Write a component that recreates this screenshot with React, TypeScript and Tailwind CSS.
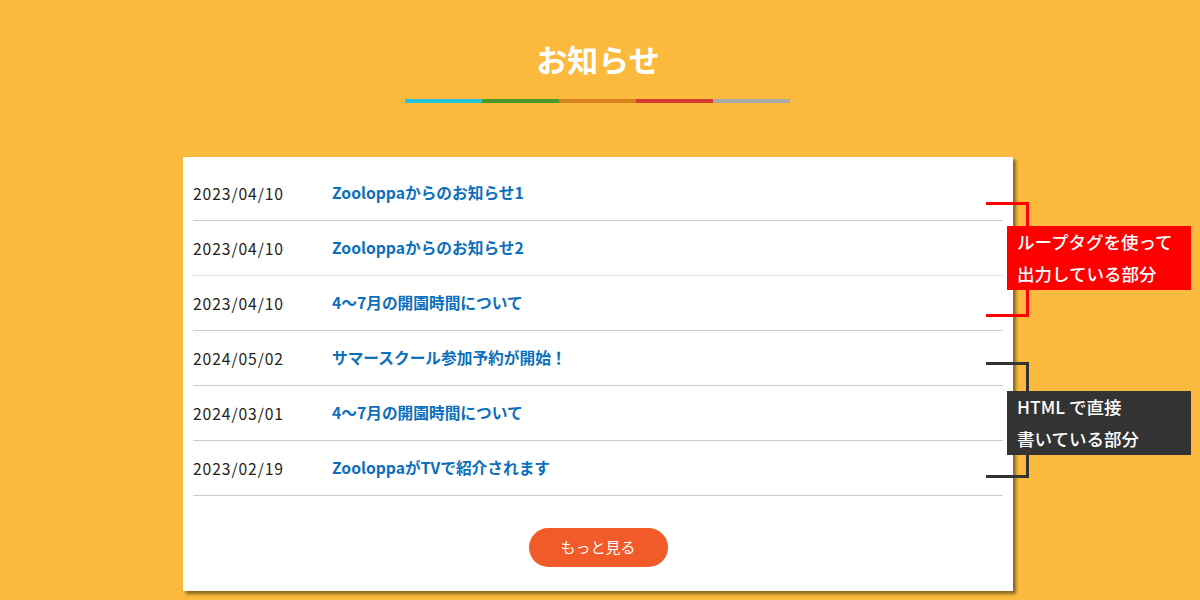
const items = [
  { date: "2023/04/10", title: "Zooloppaからのお知らせ1", border: "border-[#cccccc]" },
  { date: "2023/04/10", title: "Zooloppaからのお知らせ2", border: "border-[#e0e0e0]" },
  { date: "2023/04/10", title: "4〜7月の開園時間について", border: "border-[#cccccc]" },
  { date: "2024/05/02", title: "サマースクール参加予約が開始！", border: "border-[#cccccc]" },
  { date: "2024/03/01", title: "4〜7月の開園時間について", border: "border-[#cccccc]" },
  { date: "2023/02/19", title: "ZooloppaがTVで紹介されます", border: "border-[#cccccc]" },
];

const font = { fontFamily: '"Noto Sans CJK JP", "Noto Sans", sans-serif' };

export default function App() {
  return (
    <div className="min-h-[600px] bg-[#fbb93e] pt-[36px] pb-[10px] pr-[4px]" style={font}>
      {/* Heading */}
      <h1 className="text-center text-[31px] font-bold leading-[46px] text-white">お知らせ</h1>
      <div className="mx-auto mt-[17px] flex h-[4px] w-[385px] -translate-x-[1px]">
        <div className="flex-1 bg-[#26c6da]" />
        <div className="flex-1 bg-[#4a9a2a]" />
        <div className="flex-1 bg-[#d4821e]" />
        <div className="flex-1 bg-[#d53a30]" />
        <div className="flex-1 bg-[#aaaaaa]" />
      </div>

      {/* Card */}
      <div className="relative mx-auto mt-[54px] w-[830px] bg-white px-[10px] pt-[9px] pb-[24px] shadow-[3px_3px_3px_rgba(0,0,0,0.45)]">
        <ul>
          {items.map((it, i) => (
            <li key={i} className={`flex h-[55px] items-center border-b ${it.border} leading-[24px]`}>
              <span className="w-[139px] pt-[2px] text-[15.7px] tracking-[0.9px] text-[#222]">{it.date}</span>
              <a className="text-[15.7px] font-bold text-[#0b6fbd]">{it.title}</a>
            </li>
          ))}
        </ul>
        <div className="mt-[32px] flex justify-center">
          <button className="h-[39px] w-[139px] rounded-full bg-[#f15a29] text-[15px] text-white">もっと見る</button>
        </div>

        {/* annotations */}
        <div className="absolute left-[803px] top-[45px] h-[115px] w-[43px] border-y-[3px] border-r-[3px] border-[#ff0000]" />
        <div className="absolute left-[824px] top-[69px] flex h-[64px] w-[184px] flex-col justify-center bg-[#ff0000] pl-[10px] text-[17.5px] font-medium leading-[32px] text-white">
          <span>ループタグを使って</span>
          <span>出力している部分</span>
        </div>
        <div className="absolute left-[803px] top-[205px] h-[116px] w-[43px] border-y-[3px] border-r-[3px] border-[#333333]" />
        <div className="absolute left-[824px] top-[234px] flex h-[64px] w-[184px] flex-col justify-center bg-[#333333] pl-[10px] text-[17.5px] font-medium leading-[32px] text-white">
          <span>HTML で直接</span>
          <span>書いている部分</span>
        </div>
      </div>
    </div>
  );
}
